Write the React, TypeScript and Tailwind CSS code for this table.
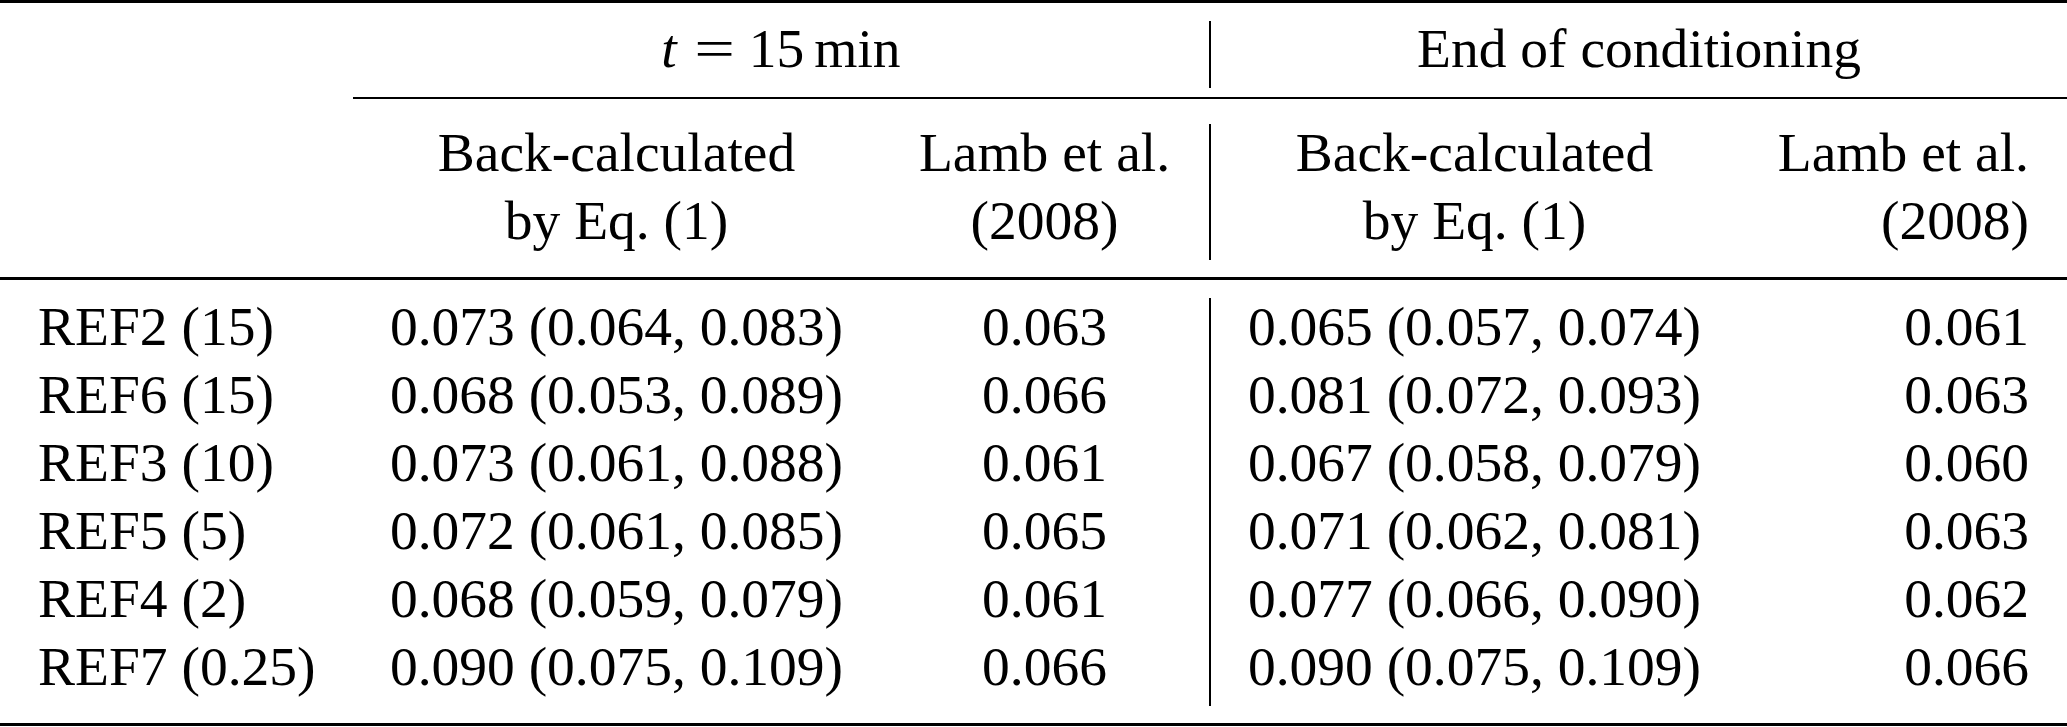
import React from "react";

// Results table: back-calculated values vs. Lamb et al. (2008)
const rows: string[][] = [
  ["REF2 (15)", "0.073 (0.064, 0.083)", "0.063", "0.065 (0.057, 0.074)", "0.061"],
  ["REF6 (15)", "0.068 (0.053, 0.089)", "0.066", "0.081 (0.072, 0.093)", "0.063"],
  ["REF3 (10)", "0.073 (0.061, 0.088)", "0.061", "0.067 (0.058, 0.079)", "0.060"],
  ["REF5 (5)", "0.072 (0.061, 0.085)", "0.065", "0.071 (0.062, 0.081)", "0.063"],
  ["REF4 (2)", "0.068 (0.059, 0.079)", "0.061", "0.077 (0.066, 0.090)", "0.062"],
  ["REF7 (0.25)", "0.090 (0.075, 0.109)", "0.066", "0.090 (0.075, 0.109)", "0.066"],
];

function Line({ children }: { children: React.ReactNode }) {
  return <div className="h-[68px] leading-[57.5px] whitespace-nowrap">{children}</div>;
}

export default function App() {
  return (
    <div className="w-[2067px] h-[727px] overflow-hidden bg-white text-black text-[55.5px] font-['Liberation_Serif','Times_New_Roman',serif]">
      <div className="grid grid-cols-[353px_527px_329px_529px_329px]">
        {/* top rule */}
        <div className="col-span-5 h-[3px] bg-black" />
        <div className="col-span-5 h-[18px]" />

        {/* group header */}
        <div />
        <div className="col-span-2 h-[67px] leading-[56.5px] text-center whitespace-nowrap">
          <span className="italic">t</span>
          <span className="inline-block ml-[22px] w-[31px] scale-x-[1.3]">=</span>
          <span className="ml-[19px]">15</span>
          <span className="ml-[10px]">min</span>
        </div>
        <div className="col-span-2 h-[67px] leading-[56.5px] text-center border-l-2 border-black whitespace-nowrap">
          End of conditioning
        </div>
        <div className="col-span-5 h-[9px]" />

        {/* cmidrule 2-5 */}
        <div />
        <div className="col-span-4 h-[2px] bg-black" />
        <div className="col-span-5 h-[25px]" />

        {/* column headers */}
        <div />
        <div className="text-center">
          <Line>Back-calculated</Line>
          <Line>by Eq. (1)</Line>
        </div>
        <div className="text-center">
          <Line>Lamb et al.</Line>
          <Line>(2008)</Line>
        </div>
        <div className="text-center border-l-2 border-black">
          <Line>Back-calculated</Line>
          <Line>by Eq. (1)</Line>
        </div>
        <div className="text-right pr-[38px]">
          <Line>Lamb et al.</Line>
          <Line>(2008)</Line>
        </div>
        <div className="col-span-5 h-[17px]" />

        {/* midrule */}
        <div className="col-span-5 h-[3px] bg-black" />
        <div className="col-span-5 h-[18px]" />

        {/* body */}
        {rows.map((r) => (
          <React.Fragment key={r[0]}>
            <div className="pl-[38px]">
              <Line>{r[0]}</Line>
            </div>
            <div className="text-center">
              <Line>{r[1]}</Line>
            </div>
            <div className="text-center">
              <Line>{r[2]}</Line>
            </div>
            <div className="text-center border-l-2 border-black">
              <Line>{r[3]}</Line>
            </div>
            <div className="text-right pr-[38px]">
              <Line>{r[4]}</Line>
            </div>
          </React.Fragment>
        ))}
        <div className="col-span-5 h-[17px]" />

        {/* bottom rule */}
        <div className="col-span-5 h-[3px] bg-black" />
      </div>
    </div>
  );
}
